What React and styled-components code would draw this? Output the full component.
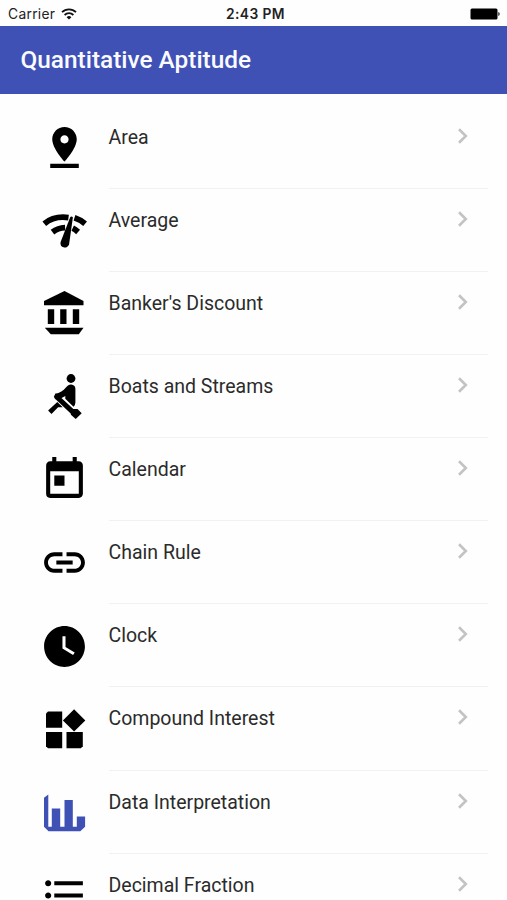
import React from 'react';
import styled, { createGlobalStyle } from 'styled-components';
import {
	MdFormatListBulleted,
	MdLink,
	MdPinDrop,
	MdToday,
	MdWatchLater
} from 'react-icons/md';

const indigo = '#3f51b5';

const GlobalStyle = createGlobalStyle`
	* {
		box-sizing: border-box;
	}

	html, body, #root {
		height: 100%;
	}

	body {
		margin: 0;
		background-color: #fefefe;
		overflow: hidden;
	}
`;

const Screen = styled.div`
	display: flex;
	flex-direction: column;
	height: 100%;
	overflow: hidden;
	font-family: Roboto, "Liberation Sans", sans-serif;
`;

const StatusBar = styled.div`
	display: grid;
	grid-template-columns: 1fr auto 1fr;
	align-items: center;
	flex: none;
	height: 25.5px;
	padding: 2px 7px 0 8px;
	font-family: Inter, "Liberation Sans", sans-serif;
	font-size: 13.8px;
	line-height: 24px;
	color: #222;
`;

const Carrier = styled.div`
	display: flex;
	align-items: center;
	gap: 6px;
	letter-spacing: 0.3px;
`;

const Time = styled.div`
	font-weight: 600;
	letter-spacing: 0.4px;
	margin-left: 3px;
`;

const Battery = styled.svg`
	justify-self: end;
`;

const Header = styled.div`
	display: flex;
	align-items: center;
	flex: none;
	height: 68px;
	padding: 0 20.5px;
	background-color: ${indigo};
`;

const Title = styled.div`
	font-size: 24.4px;
	font-weight: 500;
	line-height: 32px;
	color: #fafbff;
`;

const List = styled.div`
	flex: none;
	padding: 12.3px 19px 0 40px;
`;

const Row = styled.div`
	display: flex;
	height: 83.1px;
`;

const IconBox = styled.div`
	flex: none;
	width: 68.5px;
	padding-top: 17.2px;
	color: ${props => props.$color || '#000'};

	svg {
		display: block;
		width: 49px;
		height: 49px;
	}
`;

const RowBody = styled.div`
	display: flex;
	flex: 1;
	justify-content: space-between;
	padding: 20px 19px 0 0;
	border-bottom: 1px solid #f1f1f1;
`;

const Label = styled.div`
	font-size: 19.5px;
	line-height: 24px;
	color: #2b2b2b;
`;

const Chevron = styled.svg`
	margin-top: 2px;
`;

const MeterIcon = () => (
	<svg viewBox="0.5 0.5 49 49" fill="none" stroke="currentColor" strokeWidth="5.8">
		<path d="M4.8 18.2C11.3 12.8 19.5 10.8 29 12.1M35 12.2C39 13.5 42.4 15.5 45.6 18.2" />
		<path d="M13 26.6C16.6 23.8 20.4 22.3 25.6 22.1M33.2 22.7C35.1 23.6 36.8 24.9 38.6 26.5" />
		<path d="M30.8 11.6Q32 10.2 33.4 11.8L29.6 38.8A4.4 4.4 0 1 1 21.2 36.2z" fill="currentColor" stroke="none" />
	</svg>
);

const BankIcon = () => (
	<svg viewBox="0.5 0.5 49 49" fill="currentColor">
		<path d="M25 2.5L44 12.5V16.7H4.5V12.5z" />
		<path d="M8.3 20.8h6.4v14.7H8.3zM20.7 20.8h6.3v14.7h-6.3zM33.3 20.8h6.4v14.7h-6.4z" />
		<path d="M5.3 39.3H44L39.3 45.8H11.3z" />
	</svg>
);

const RowerIcon = () => (
	<svg viewBox="0.5 0.5 49 49" fill="currentColor">
		<circle cx="31.5" cy="7" r="4.4" />
		<path d="M15.4 22.2C20.5 21.6 23.8 19 26.4 16C28.2 13.9 30 12.9 31.8 13.1C34.2 13.4 35.9 15 35.9 17.2V31Q35.9 33.6 34 35.2L25.8 27.3V24.4Q22 27.4 16 27.8z" />
		<path d="M17 25.2L33.2 40.4" fill="none" stroke="currentColor" strokeWidth="5" strokeLinecap="round" />
		<path d="M33 37.4H38L42.2 41.8L36.2 47.6L31.4 43.2V39z" />
		<path d="M17.8 30.4L23.2 35.8H18.6L12 42.4L8.6 39z" />
	</svg>
);

const WidgetsIcon = () => (
	<svg viewBox="0.5 0.5 49 49" fill="currentColor">
		<path d="M8.5 6.9h14.2v16.4H6.5V9z" />
		<path d="M6.5 27.4h16.2v16.3H8.5l-2-2z" />
		<path d="M27 27.4h16.3v14.3l-2 2H27z" />
		<path d="M34.6 4.7L45.8 15.9 34.6 27.1 23.4 15.9z" />
	</svg>
);

const ChartIcon = () => (
	<svg viewBox="0.5 0.5 49 49" fill="currentColor">
		<path d="M8.8 7v32.2h3.5V21h8.4v18.2h4.3V12.4h8.3v26.8h4V28.9h8.3v10.3l-4.8 4.6H9L4.5 39.2V10.2z" />
	</svg>
);

const topics = [
	{ name: 'Area', icon: MdPinDrop },
	{ name: 'Average', icon: MeterIcon },
	{ name: 'Banker\'s Discount', icon: BankIcon },
	{ name: 'Boats and Streams', icon: RowerIcon },
	{ name: 'Calendar', icon: MdToday },
	{ name: 'Chain Rule', icon: MdLink },
	{ name: 'Clock', icon: MdWatchLater },
	{ name: 'Compound Interest', icon: WidgetsIcon },
	{ name: 'Data Interpretation', icon: ChartIcon, color: indigo },
	{ name: 'Decimal Fraction', icon: MdFormatListBulleted }
];

const Topic = ({ name, icon: Icon, color }) => (
	<Row>
		<IconBox $color={color}><Icon /></IconBox>
		<RowBody>
			<Label>{name}</Label>
			<Chevron width="12" height="16" viewBox="0 0 12 16" fill="none" stroke="#c3c3c3" strokeWidth="2.6">
				<path d="M2 1.3L8.8 8 2 14.7" />
			</Chevron>
		</RowBody>
	</Row>
);

const App = () => (
	<Screen>
		<GlobalStyle />
		<StatusBar>
			<Carrier>
				Carrier
				<svg width="16" height="12" viewBox="0 0 16 12" fill="none" stroke="#111" strokeWidth="1.8">
					<path d="M1 4.2a10 10 0 0 1 14 0M3.6 7a6.3 6.3 0 0 1 8.8 0" />
					<path d="M8 11.6L5.6 9.2a3.4 3.4 0 0 1 4.8 0z" fill="#111" stroke="none" />
				</svg>
			</Carrier>
			<Time>2:43 PM</Time>
			<Battery width="30" height="12" viewBox="0 0 30 12">
				<rect x="0.5" y="0.5" width="27" height="11" rx="1.5" fill="#000" />
				<path d="M28.4 4c1.6.6 1.6 3.4 0 4z" fill="#000" />
			</Battery>
		</StatusBar>
		<Header>
			<Title>Quantitative Aptitude</Title>
		</Header>
		<List>
			{topics.map(topic => <Topic key={topic.name} {...topic} />)}
		</List>
	</Screen>
);

export default App;
